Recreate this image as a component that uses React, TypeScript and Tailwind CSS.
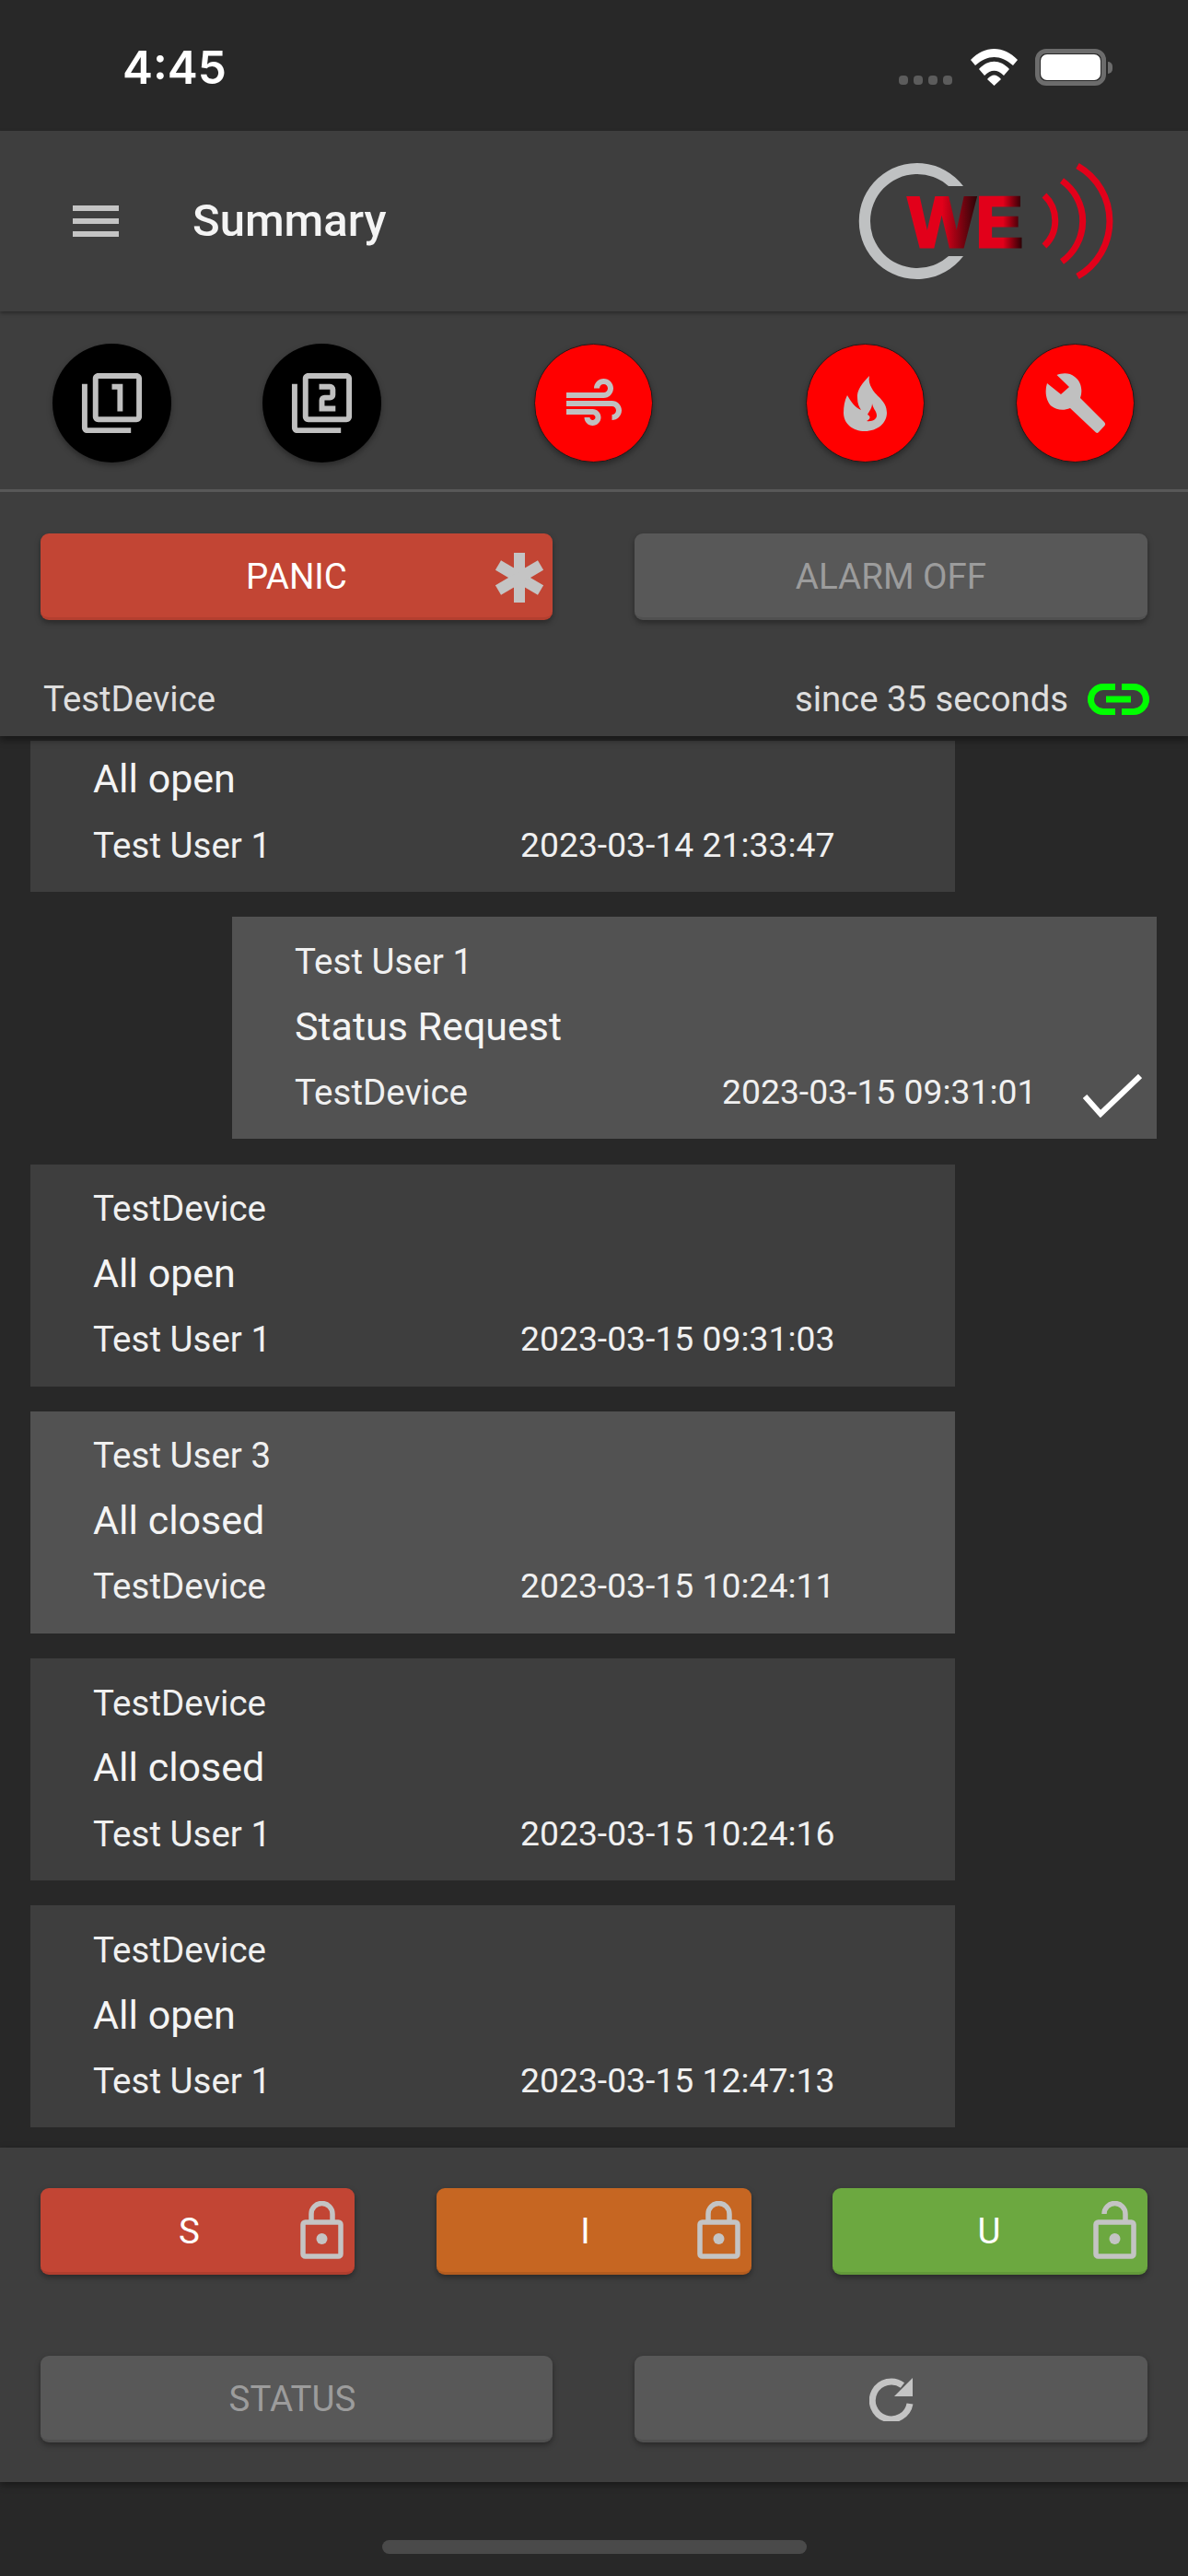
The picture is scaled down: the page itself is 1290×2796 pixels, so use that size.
import React from 'react';
import { MdFilter1, MdFilter2, MdAir } from 'react-icons/md';

interface MessageProps {
  top?: string;
  title: string;
  sender: string;
  date: string;
  mine?: boolean;
  light?: boolean;
}

const messages: MessageProps[] = [
  { top: 'Test User 1', title: 'Status Request', sender: 'TestDevice', date: '2023-03-15 09:31:01', mine: true },
  { top: 'TestDevice', title: 'All open', sender: 'Test User 1', date: '2023-03-15 09:31:03' },
  { top: 'Test User 3', title: 'All closed', sender: 'TestDevice', date: '2023-03-15 10:24:11', light: true },
  { top: 'TestDevice', title: 'All closed', sender: 'Test User 1', date: '2023-03-15 10:24:16' },
  { top: 'TestDevice', title: 'All open', sender: 'Test User 1', date: '2023-03-15 12:47:13' },
];

function FlameIcon() {
  return (
    <svg width="47" height="60" viewBox="0 0 47 60" fill="#c0c0c0">
      <path
        fillRule="evenodd"
        d="M28 0C20 8 14 16 15 24C15 30 17 34 19 37C12 34 8 28 4 21C1 27 0 33 0 40C0 52 10 60 23 60C37 60 47 51 47 40C47 27 36 23 31 14C28 9 27 5 28 0ZM31 30C32 36 36 38 36 43C36 47 31 50 25 49C29 47 30 44 26 42C28 38 31 35 31 30Z"
      />
    </svg>
  );
}

function WrenchIcon() {
  return (
    <svg width="66" height="65" viewBox="0 0 66 65" fill="#c0c0c0">
      <path d="M12.5 2C18 0 26 -1 32 4C39 9 41 19 38 27L64 53Q66 55 64.5 57L58 64Q56 66 54 63.5L27 38C20 41 12 40 7 36C1 31 -1 20 2 11L17 23L26 15Z" />
    </svg>
  );
}

function StarIcon() {
  return (
    <svg width="52" height="54" viewBox="0 0 52 54" stroke="#c4c4c4" strokeWidth="12" className="absolute right-[10px] top-[21px]">
      <path d="M26 0V54" />
      <path d="M3 13.5L49 40.5" />
      <path d="M49 13.5L3 40.5" />
    </svg>
  );
}

function LockIcon({ open }: { open?: boolean }) {
  return (
    <svg width="47" height="63" viewBox="0 0 47 63" fill="none" stroke="#c4c4c4" strokeWidth="5.5" className="absolute right-[12px] top-[14px]">
      <rect x="3" y="23" width="41" height="37" rx="2.5" />
      {open ? <path d="M12 14a11.5 11.5 0 0 1 23 0V23" /> : <path d="M12 23V14a11.5 11.5 0 0 1 23 0V23" />}
      <circle cx="23.5" cy="41" r="6" fill="#c4c4c4" stroke="none" />
    </svg>
  );
}

function RefreshIcon() {
  return (
    <svg width="48" height="48" viewBox="0 0 48 48" fill="none">
      <path d="M36 9A20.5 20.5 0 1 0 44 29" stroke="#c4c4c4" strokeWidth="7" />
      <path d="M47 1V21H27Z" fill="#c4c4c4" />
    </svg>
  );
}

function Logo() {
  return (
    <svg width="285" height="130" viewBox="0 0 285 130" fill="none">
      <defs>
        <linearGradient id="we" gradientUnits="userSpaceOnUse" x1="55" y1="0" x2="182" y2="0">
          <stop offset="0" stopColor="#e2001a" />
          <stop offset="0.3" stopColor="#e2001a" />
          <stop offset="0.6" stopColor="#2a0508" />
          <stop offset="0.61" stopColor="#e2001a" />
          <stop offset="0.82" stopColor="#e2001a" />
          <stop offset="1" stopColor="#160003" />
        </linearGradient>
      </defs>
      <path d="M116 27A63 63 0 1 0 116 103H100A51 51 0 1 1 100 27Z" fill="#bfc1c2" />
      <text
        x="56"
        y="93"
        fontFamily="Liberation Sans"
        fontWeight="700"
        fontSize="78"
        textLength="125"
        lengthAdjust="spacingAndGlyphs"
        fill="url(#we)"
        stroke="url(#we)"
        strokeWidth="3"
      >
        WE
      </text>
      <g stroke="#e2001a" strokeWidth="7">
        <path d="M204 37A38 38 0 0 1 204 92" />
        <path d="M223 21A54 54 0 0 1 223 109" />
        <path d="M240 5A69 69 0 0 1 240 125" />
      </g>
    </svg>
  );
}

function RoundButton({ red, children, className }: { red?: boolean; children: React.ReactNode; className?: string }) {
  return (
    <div
      className={`w-[129px] h-[129px] rounded-full flex items-center justify-center shadow-[0_3px_6px_rgba(0,0,0,0.35)] ${
        red ? 'bg-[#ff0000] border-[1.5px] border-[#1c1c1c]' : 'bg-black'
      } ${className ?? ''}`}
    >
      {children}
    </div>
  );
}

function Message({ top, title, sender, date, mine, light }: MessageProps) {
  return (
    <div
      className={`w-[1004px] flex flex-col pl-[68px] ${top ? 'h-[241px] pt-[13px]' : 'h-[164px] pt-[7px]'} ${mine ? 'ml-[219px]' : ''} ${
        mine || light ? 'bg-[#525252]' : 'bg-[#3e3e3e]'
      }`}
    >
      {top && <div className="h-[71px] flex items-center text-[38.5px] text-[#f0f0f0]">{top}</div>}
      <div className="h-[71px] flex items-center pb-[2px] text-[43px] text-[#f4f4f4]">{title}</div>
      <div className="h-[71px] flex items-center text-[38.5px] text-[#f0f0f0]">
        <span className="w-[464px]">{sender}</span>
        <span className="text-[37.3px]">{date}</span>
        {mine && (
          <svg width="64" height="48" viewBox="0 0 64 48" fill="none" stroke="#ffffff" strokeWidth="6" className="ml-auto mr-[16px] mt-[6px]">
            <path d="M2 25L19 44L62 3" />
          </svg>
        )}
      </div>
    </div>
  );
}

const actionClass = 'relative h-[94px] rounded-[9px] flex items-center justify-center pt-[3px] text-[38.5px] shadow-[0_3px_6px_rgba(0,0,0,0.35)]';

export default function App() {
  return (
    <div className="w-[1290px] h-[2796px] bg-[#282828] flex flex-col overflow-hidden font-['Roboto',sans-serif]">
      {/* status bar */}
      <div className="h-[142px] shrink-0 flex items-start pt-[44px] pl-[133px] pr-[82px]">
        <span className="font-['Inter',sans-serif] font-semibold text-[49.5px] leading-[58px] text-white">4:45</span>
        <div className="ml-auto flex items-end mt-[9px]">
          <div className="flex gap-[6px] mb-[1px] mr-[20px]">
            <div className="w-[10px] h-[10px] rounded-[4px] bg-[#5c5c5c]" />
            <div className="w-[10px] h-[10px] rounded-[4px] bg-[#5c5c5c]" />
            <div className="w-[10px] h-[10px] rounded-[4px] bg-[#5c5c5c]" />
            <div className="w-[10px] h-[10px] rounded-[4px] bg-[#5c5c5c]" />
          </div>
          <svg width="51" height="40" viewBox="0 0 51 40" fill="#ffffff" className="mr-[19px]">
            <path d="M0 12C15 -4 36 -4 51 12L46 18C32 6 19 6 5 18Z" />
            <path d="M9 22C19 11 32 11 42 22L36 29C29 22 22 22 15 29Z" />
            <path d="M18 33C23 27 28 27 33 33L25.5 40Z" />
          </svg>
          <div className="w-[77px] h-[40px] rounded-[12px] border-[5px] border-[#6c6c6c] p-[1px]">
            <div className="w-full h-full rounded-[7px] bg-white" />
          </div>
          <div className="w-[5px] h-[13px] rounded-r-[5px] bg-[#6c6c6c] ml-[2px] mb-[13px]" />
        </div>
      </div>

      {/* header */}
      <div className="h-[196px] shrink-0 bg-[#3e3e3e] flex items-center pl-[79px] pr-[75px] relative z-20 shadow-[0_2px_4px_rgba(0,0,0,0.35)]">
        <div className="w-[50px] flex flex-col gap-[8px]">
          <div className="h-[6px] bg-[#c4c4c4]" />
          <div className="h-[6px] bg-[#c4c4c4]" />
          <div className="h-[6px] bg-[#c4c4c4]" />
        </div>
        <span className="ml-[80px] text-[49px] font-medium text-[#f4f4f4]">Summary</span>
        <div className="ml-auto">
          <Logo />
        </div>
      </div>

      {/* alarms and device */}
      <div className="h-[461px] shrink-0 bg-[#3e3e3e] flex flex-col relative z-10 shadow-[0_4px_8px_rgba(0,0,0,0.45)]">
        <div className="h-[193px] flex items-center pl-[57px] pt-[6px]">
          <RoundButton>
            <MdFilter1 size={71} color="#c0c0c0" />
          </RoundButton>
          <RoundButton className="ml-[99px]">
            <MdFilter2 size={71} color="#c0c0c0" />
          </RoundButton>
          <RoundButton red className="ml-[166px]">
            <MdAir size={72} color="#c0c0c0" />
          </RoundButton>
          <RoundButton red className="ml-[166px]">
            <FlameIcon />
          </RoundButton>
          <RoundButton red className="ml-[99px]">
            <WrenchIcon />
          </RoundButton>
        </div>
        <div className="h-[3px] bg-[#585858]" />
        <div className="flex justify-between px-[44px] mt-[45px]">
          <div className={`${actionClass} w-[556px] bg-[#c24534] border-b-[3px] border-[#b33f2f] text-white`}>
            PANIC
            <StarIcon />
          </div>
          <div className={`${actionClass} w-[557px] bg-[#585858] border-b-[3px] border-[#505050] text-[#9c9c9c]`}>ALARM OFF</div>
        </div>
        <div className="flex items-center pl-[47px] pr-[42px] mt-[57px] text-[38.3px] text-[#dedede]">
          <span>TestDevice</span>
          <span className="ml-auto">since 35 seconds</span>
          <svg width="67" height="34" viewBox="0 0 67 34" fill="none" stroke="#00ff00" strokeWidth="7" className="ml-[21px]">
            <path d="M30 3.5H17a13.5 13.5 0 0 0 0 27H30" />
            <path d="M37 3.5H50a13.5 13.5 0 0 1 0 27H37" />
            <path d="M20 17H47" />
          </svg>
        </div>
      </div>

      {/* message list */}
      <div className="flex-1 min-h-0 overflow-hidden flex flex-col gap-[27.25px] pt-[5px] pl-[33px]">
        <Message title="All open" sender="Test User 1" date="2023-03-14 21:33:47" />
        {messages.map((m) => (
          <Message key={m.date} {...m} />
        ))}
      </div>

      {/* commands */}
      <div className="h-[363px] shrink-0 bg-[#3e3e3e] flex flex-col px-[44px] pt-[44px] relative z-10 shadow-[0_3px_8px_rgba(0,0,0,0.4)]">
        <div className="flex justify-between">
          <div className={`${actionClass} w-[341px] bg-[#c24534] border-b-[3px] border-[#b03e2f] text-white pr-[18px]`}>
            S
            <LockIcon />
          </div>
          <div className={`${actionClass} w-[342px] bg-[#c66622] border-b-[3px] border-[#b35c1f] text-white pr-[18px]`}>
            I
            <LockIcon />
          </div>
          <div className={`${actionClass} w-[342px] bg-[#6ca840] border-b-[3px] border-[#62993a] text-white pr-[2px]`}>
            U
            <LockIcon open />
          </div>
        </div>
        <div className="flex justify-between mt-[88px]">
          <div className={`${actionClass} w-[556px] bg-[#585858] border-b-[3px] border-[#505050] text-[#9c9c9c] pr-[9px]`}>STATUS</div>
          <div className={`${actionClass} w-[557px] bg-[#585858] border-b-[3px] border-[#505050]`}>
            <RefreshIcon />
          </div>
        </div>
      </div>

      {/* home indicator */}
      <div className="h-[102px] shrink-0 flex justify-center pt-[63px]">
        <div className="w-[461px] h-[15px] rounded-full bg-[#4a4a4a]" />
      </div>
    </div>
  );
}
